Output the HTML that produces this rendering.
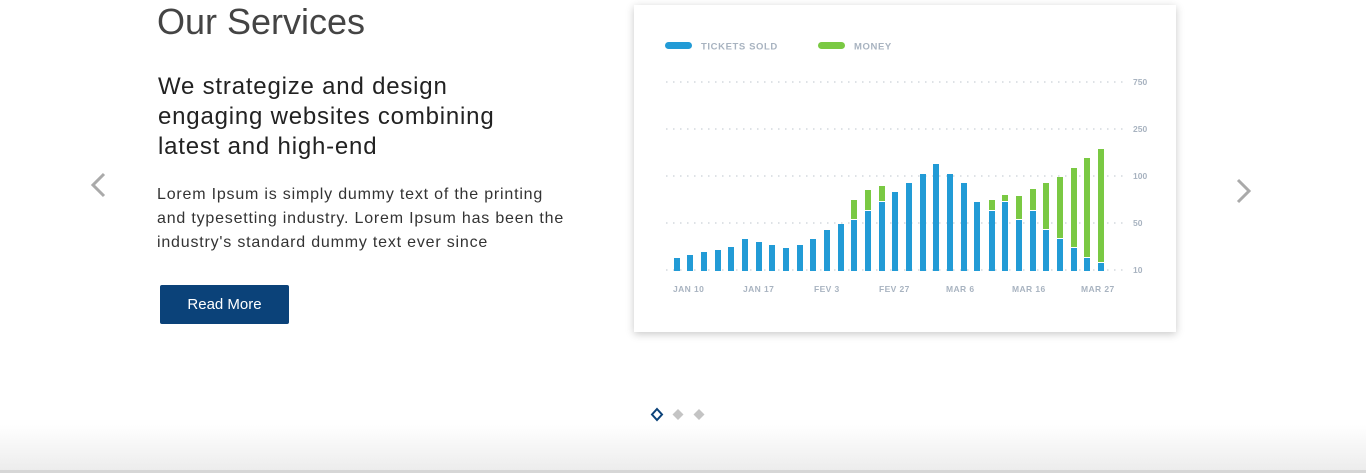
<!DOCTYPE html>
<html><head><meta charset="utf-8"><style>
html,body{margin:0;padding:0;width:1366px;height:473px;overflow:hidden;background:#fff;font-family:"Liberation Sans",sans-serif}
.abs{position:absolute}
h1{position:absolute;left:157px;top:0px;margin:0;font-weight:300;font-size:36px;color:#444;letter-spacing:0px;line-height:44px}
h2{position:absolute;left:158px;top:72px;margin:0;font-weight:400;font-size:24px;line-height:30px;color:#222;width:350px;letter-spacing:0.8px}
p{position:absolute;left:157px;top:183px;margin:0;font-size:16px;line-height:24px;color:#333;width:415px;letter-spacing:0.8px}
.btn{position:absolute;left:160px;top:285px;width:129px;height:39px;background:#0b4279;border-radius:2px;color:#fff;font-size:15px;line-height:39px;text-align:center}
.card{position:absolute;left:634px;top:5px;width:542px;height:327px;background:#fff;box-shadow:0 2px 8px rgba(0,0,0,.22)}
.bottom{position:absolute;left:0;top:425px;width:1366px;height:46px;background:linear-gradient(#fff,#ececec)}
.line{position:absolute;left:0;top:470px;width:1366px;height:3px;background:#d6d6d6}
</style></head><body>
<h1>Our Services</h1>
<h2>We strategize and design engaging websites combining latest and high-end</h2>
<p>Lorem Ipsum is simply dummy text of the printing and typesetting industry. Lorem Ipsum has been the industry's standard dummy text ever since</p>
<div class="btn">Read More</div>
<svg class="abs" style="left:88px;top:172px" width="20" height="28"><path d="M16 2 L5 13 L16 24" stroke="#aaa" stroke-width="3" fill="none"/></svg>
<svg class="abs" style="left:1234px;top:178px" width="20" height="28"><path d="M4 2 L15 13 L4 24" stroke="#aaa" stroke-width="3" fill="none"/></svg>
<div class="card"></div>
<svg class="abs" style="left:0;top:0" width="1366" height="340" font-family="Liberation Sans, sans-serif" font-weight="bold">
<rect x="665" y="42" width="27" height="7" rx="3.5" fill="#229bd6"/>
<text x="701" y="49.5" font-size="9.5" fill="#a8b3c0" letter-spacing="0.6">TICKETS SOLD</text>
<rect x="818" y="42" width="27" height="7" rx="3.5" fill="#7ac943"/>
<text x="854" y="49.5" font-size="9.5" fill="#a8b3c0" letter-spacing="0.6">MONEY</text>
<g stroke="#d3d8de" stroke-width="1.5" stroke-dasharray="1.5 5.5">
<line x1="666" y1="82" x2="1125" y2="82"/><line x1="666" y1="129" x2="1125" y2="129"/><line x1="666" y1="176" x2="1125" y2="176"/><line x1="666" y1="223" x2="1125" y2="223"/><line x1="666" y1="270" x2="1125" y2="270"/>
</g>
<g font-size="8.5" fill="#a8b3c0">
<text x="1133" y="85">750</text><text x="1133" y="132">250</text><text x="1133" y="179">100</text><text x="1133" y="226">50</text><text x="1133" y="273">10</text>
</g>
<g font-size="8.5" fill="#a8b3c0" letter-spacing="0.4">
<text x="673" y="292">JAN 10</text><text x="743" y="292">JAN 17</text><text x="814" y="292">FEV 3</text><text x="879" y="292">FEV 27</text><text x="946" y="292">MAR 6</text><text x="1012" y="292">MAR 16</text><text x="1081" y="292">MAR 27</text>
</g>
<g fill="#229bd6">
<rect x="674" y="258" width="6" height="13"/><rect x="687" y="255" width="6" height="16"/><rect x="701" y="252" width="6" height="19"/><rect x="715" y="250" width="6" height="21"/><rect x="728" y="247" width="6" height="24"/><rect x="742" y="239" width="6" height="32"/><rect x="756" y="242" width="6" height="29"/><rect x="769" y="245" width="6" height="26"/><rect x="783" y="248" width="6" height="23"/><rect x="797" y="245" width="6" height="26"/><rect x="810" y="239" width="6" height="32"/><rect x="824" y="230" width="6" height="41"/><rect x="838" y="224" width="6" height="47"/><rect x="851" y="220" width="6" height="51"/><rect x="865" y="211" width="6" height="60"/><rect x="879" y="202" width="6" height="69"/><rect x="892" y="192" width="6" height="79"/><rect x="906" y="183" width="6" height="88"/><rect x="920" y="174" width="6" height="97"/><rect x="933" y="164" width="6" height="107"/><rect x="947" y="174" width="6" height="97"/><rect x="961" y="183" width="6" height="88"/><rect x="974" y="202" width="6" height="69"/><rect x="989" y="211" width="6" height="60"/><rect x="1002" y="202" width="6" height="69"/><rect x="1016" y="220" width="6" height="51"/><rect x="1030" y="211" width="6" height="60"/><rect x="1043" y="230" width="6" height="41"/><rect x="1057" y="239" width="6" height="32"/><rect x="1071" y="248" width="6" height="23"/><rect x="1084" y="258" width="6" height="13"/><rect x="1098" y="263" width="6" height="8"/>
</g>
<g fill="#7ac943">
<rect x="851" y="200" width="6" height="19"/><rect x="865" y="190" width="6" height="20"/><rect x="879" y="186" width="6" height="15"/><rect x="989" y="200" width="6" height="10"/><rect x="1002" y="195" width="6" height="6"/><rect x="1016" y="196" width="6" height="23"/><rect x="1030" y="189" width="6" height="21"/><rect x="1043" y="183" width="6" height="46"/><rect x="1057" y="177" width="6" height="61"/><rect x="1071" y="168" width="6" height="79"/><rect x="1084" y="158" width="6" height="99"/><rect x="1098" y="149" width="6" height="113"/>
</g>
</svg>
<div class="bottom"></div><div class="line"></div>
<svg class="abs" style="left:648px;top:406px" width="64" height="18">
<path d="M9 3 L14 8.5 L9 14 L4 8.5 Z" fill="none" stroke="#0b4279" stroke-width="2"/>
<path d="M30 3 L35.5 8.5 L30 14 L24.5 8.5 Z" fill="#c4c4c4"/>
<path d="M51 3 L56.5 8.5 L51 14 L45.5 8.5 Z" fill="#c4c4c4"/>
</svg>
</body></html>
